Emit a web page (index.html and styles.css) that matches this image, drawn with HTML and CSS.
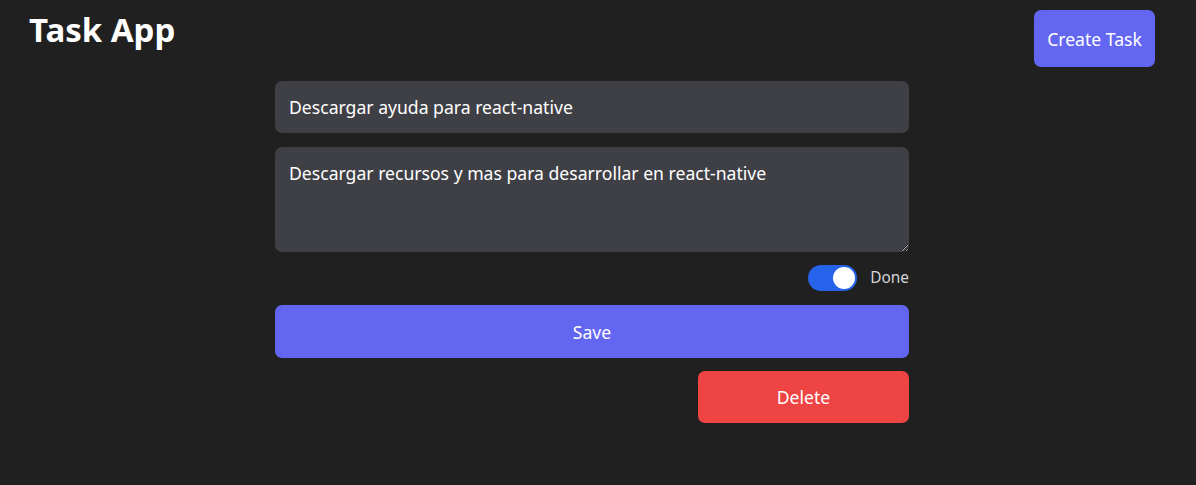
FILE: index.html
```html
<!DOCTYPE html>
<html lang="es">
<head>
<meta charset="utf-8">
<title>Task App</title>
<link rel="stylesheet" href="styles.css">
</head>
<body>
<header class="header">
  <h1 class="title">Task App</h1>
  <button class="btn btn-create">Create Task</button>
</header>
<main class="form">
  <input class="field" type="text" value="Descargar ayuda para react-native">
  <textarea class="field area">Descargar recursos y mas para desarrollar en react-native</textarea>
  <label class="toggle-row">
    <span class="toggle"><span class="knob"></span></span>
    <span class="toggle-label">Done</span>
  </label>
  <button class="btn btn-save">Save</button>
  <div class="delete-row">
    <button class="btn btn-delete">Delete</button>
  </div>
</main>
</body>
</html>
```

FILE: styles.css
```css
* { box-sizing: border-box; }
html, body { margin: 0; padding: 0; }
body {
  background: #202020;
  color: #ffffff;
  font-family: "Noto Sans", sans-serif;
  width: 1196px;
  height: 485px;
  overflow: hidden;
}
.header {
  display: flex;
  justify-content: space-between;
  align-items: flex-start;
  padding: 10px 41px 0 29px;
}
.title {
  margin: 0;
  font-size: 33px;
  font-weight: 700;
  line-height: 40px;
}
.btn {
  border: none;
  color: #ffffff;
  font-family: "Noto Sans", sans-serif;
  font-size: 17.6px;
  line-height: 26px;
  border-radius: 7px;
  cursor: pointer;
  padding: 0;
}
.btn-create {
  background: #6366f1;
  width: 121px;
  height: 57px;
}
.form {
  width: 634px;
  margin: 14px 0 0 275px;
  display: flex;
  flex-direction: column;
}
.field {
  background: #3f3f46;
  border: none;
  border-radius: 7px;
  color: #ffffff;
  font-family: "Noto Sans", sans-serif;
  font-size: 17.6px;
  line-height: 26px;
  padding: 13px 14px 13px;
  height: 52px;
  outline: none;
}
.area {
  margin-top: 14px;
  height: 105px;
  padding-top: 13px;
  resize: vertical;
}
.toggle-row {
  display: flex;
  justify-content: flex-end;
  align-items: center;
  gap: 13px;
  margin-top: 13px;
  height: 26px;
}
.toggle {
  width: 49px;
  height: 26px;
  border-radius: 13px;
  background: #2563eb;
  display: flex;
  align-items: center;
  justify-content: flex-end;
  padding: 0 2px;
}
.knob {
  width: 22px;
  height: 22px;
  border-radius: 50%;
  background: #ffffff;
}
.toggle-label {
  font-size: 15.4px;
  color: #d4d4d8;
  line-height: 22px;
}
.btn-save {
  margin-top: 14px;
  background: #6366f1;
  height: 53px;
  width: 100%;
}
.delete-row {
  display: flex;
  justify-content: flex-end;
  margin-top: 13px;
}
.btn-delete {
  background: #ef4444;
  width: 211px;
  height: 52px;
}
```
